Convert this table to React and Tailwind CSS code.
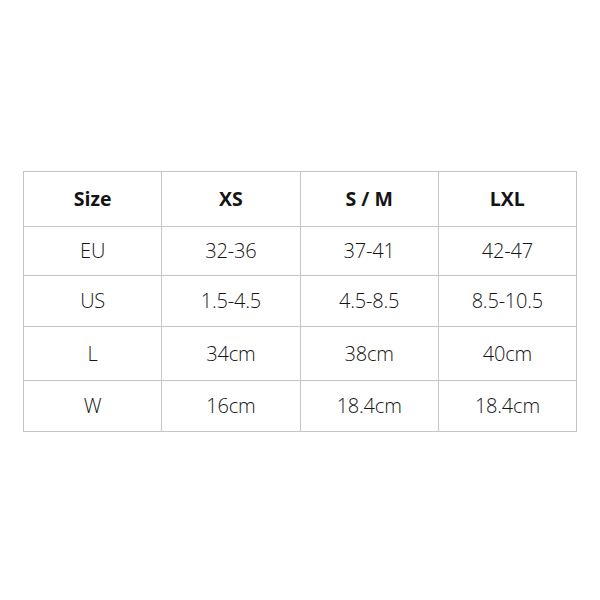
const headers = ["Size", "XS", "S / M", "LXL"];

const rows = [
  { id: "eu", cells: ["EU", "32-36", "37-41", "42-47"], h: "h-[49px]" },
  { id: "us", cells: ["US", "1.5-4.5", "4.5-8.5", "8.5-10.5"], h: "h-[51px]" },
  { id: "l", cells: ["L", "34cm", "38cm", "40cm"], h: "h-[54px]" },
  { id: "w", cells: ["W", "16cm", "18.4cm", "18.4cm"], h: "h-[51px]" },
];

export default function App() {
  return (
    <div className="w-[600px] h-[600px] bg-white pt-[171px] pl-[23px] font-['Open_Sans',sans-serif] text-[#141414]">
      <table className="w-[554px] border-collapse table-fixed">
        <thead>
          <tr className="h-[55px]">
            {headers.map((h) => (
              <th
                key={h}
                className="border-[1.5px] border-[#c4c4c4] text-[19.5px] font-bold text-center align-middle"
              >
                {h}
              </th>
            ))}
          </tr>
        </thead>
        <tbody>
          {rows.map((row) => (
            <tr key={row.id} className={row.h}>
              {row.cells.map((c, i) => (
                <td
                  key={i}
                  className="border-[1.5px] border-[#c4c4c4] text-[20px] font-light tracking-[-0.2px] text-center align-middle"
                >
                  {c}
                </td>
              ))}
            </tr>
          ))}
        </tbody>
      </table>
    </div>
  );
}
